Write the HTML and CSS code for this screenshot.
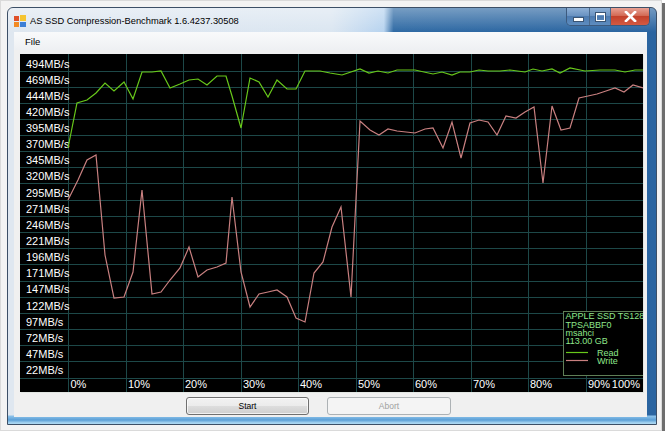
FILE: index.html
```html
<!DOCTYPE html>
<html>
<head>
<meta charset="utf-8">
<link rel="stylesheet" href="styles.css">
</head>
<body>
<div class="shot">
  <div class="window">
    <div class="titlebar">
      <svg class="appicon" width="12" height="12" viewBox="0 0 12 12">
        <rect x="0" y="1" width="5" height="5" fill="#e0502a"/>
        <rect x="6" y="0" width="6" height="6" fill="#f5c431"/>
        <rect x="0" y="7" width="5" height="5" fill="#f28a24"/>
        <rect x="6" y="7" width="6" height="5" fill="#3d7fd6"/>
      </svg>
      <span class="title">AS SSD Compression-Benchmark 1.6.4237.30508</span>
      <div class="caption">
        <div class="cbtn min"><span class="glyph-min"></span></div>
        <div class="cbtn max"><span class="glyph-max"></span></div>
        <div class="cbtn close">
          <svg width="13" height="11" viewBox="0 0 13 11"><path d="M2 1 L11 10 M11 1 L2 10" stroke="#fff" stroke-width="2.6" stroke-linecap="square"/></svg>
        </div>
      </div>
    </div>
    <div class="frame-row">
      <div class="client">
        <div class="menubar"><span class="menuitem">File</span></div>
        <div class="chart">
          <svg class="plot" width="623" height="338" viewBox="0 0 623 338">
            <g class="grid">
              <path d="M0 17.5H623M0 33.5H623M0 49.5H623M0 65.5H623M0 81.5H623M0 97.5H623M0 113.5H623M0 129.5H623M0 146.5H623M0 162.5H623M0 178.5H623M0 194.5H623M0 210.5H623M0 227.5H623M0 243.5H623M0 259.5H623M0 275.5H623M0 291.5H623M0 307.5H623M0 324.5H623"/>
              <path d="M48.5 0V338M106.5 0V338M163.5 0V338M221.5 0V338M278.5 0V338M336.5 0V338M393.5 0V338M451.5 0V338M508.5 0V338M566.5 0V338"/>
            </g>
            <g class="ylab">
              <text x="6" y="13.5">494MB/s</text>
              <text x="6" y="29.5">469MB/s</text>
              <text x="6" y="45.5">444MB/s</text>
              <text x="6" y="62">420MB/s</text>
              <text x="6" y="78">395MB/s</text>
              <text x="6" y="94">370MB/s</text>
              <text x="6" y="110">345MB/s</text>
              <text x="6" y="126">320MB/s</text>
              <text x="6" y="142.5">295MB/s</text>
              <text x="6" y="158.5">271MB/s</text>
              <text x="6" y="174.5">246MB/s</text>
              <text x="6" y="191">221MB/s</text>
              <text x="6" y="207">196MB/s</text>
              <text x="6" y="223">171MB/s</text>
              <text x="6" y="239">147MB/s</text>
              <text x="6" y="255.5">122MB/s</text>
              <text x="6" y="271.5">97MB/s</text>
              <text x="6" y="287.5">72MB/s</text>
              <text x="6" y="304">47MB/s</text>
              <text x="6" y="320">22MB/s</text>
            </g>
            <g class="xlab">
              <text x="50.5" y="334">0%</text>
              <text x="108" y="334">10%</text>
              <text x="165" y="334">20%</text>
              <text x="223" y="334">30%</text>
              <text x="280" y="334">40%</text>
              <text x="338" y="334">50%</text>
              <text x="395" y="334">60%</text>
              <text x="453" y="334">70%</text>
              <text x="510" y="334">80%</text>
              <text x="568" y="334">90%</text>
              <text x="620" y="334" text-anchor="end">100%</text>
            </g>
            <polyline class="read" transform="translate(-20 -54)" points="68,148 77,103 87,100 96,93 105,83 114,91 124,82 133,99 142,72 152,72 161,71 170,88 180,84 189,80 198,79 207,85 217,76 226,76 232,96 241,128 250,78 259,82 268,97 277,80 287,89 296,89 305,71 320,71 330,73 342,75 360,69 369,73 378,71 388,73 397,70 415,70 433,74 442,72 452,75 460,72 470,72 479,70 488,71 500,71 510,70 525,72 533,69 542,71 552,69 560,73 570,68 585,71 600,70 615,70 625,72 635,70 643,70"/>
            <polyline class="write" transform="translate(-20 -54)" points="68,200 78,180 87,160 96,155 105,255 114,298 124,297 133,272 142,190 152,294 161,292 170,280 180,268 189,247 198,277 207,270 217,267 226,263 232,197 241,272 250,307 259,294 268,292 277,290 287,297 296,318 305,322 314,273 323,262 332,227 341,207 351,297 360,121 370,130 379,135 388,129 397,131 415,133 425,129 433,128 443,148 452,122 461,158 470,123 479,120 488,122 497,135 506,116 516,118 525,112 534,107 543,183 552,106 561,130 570,128 579,98 588,96 597,94 606,91 615,88 624,92 633,85 643,88"/>
            <g class="legend">
              <rect class="lbox" x="543.5" y="257.5" width="90" height="64"/>
              <text x="545.5" y="265">APPLE SSD TS128B</text>
              <text x="545.5" y="273.5">TPSABBF0</text>
              <text x="545.5" y="281.5">msahci</text>
              <text x="545.5" y="290">113.00 GB</text>
              <line x1="546" y1="298.5" x2="568" y2="298.5" class="lread"/>
              <line x1="546" y1="306.5" x2="568" y2="306.5" class="lwrite"/>
              <text x="577" y="301.5">Read</text>
              <text x="577" y="309.5">Write</text>
            </g>
          </svg>
        </div>
        <div class="buttons">
          <button class="btn">Start</button>
          <button class="btn" disabled>Abort</button>
        </div>
      </div>
    </div>
  </div>
</div>
</body>
</html>
```

FILE: styles.css
```css
html, body {
  margin: 0;
  padding: 0;
  background: #ffffff;
}
.shot {
  width: 662px;
  height: 431px;
  padding: 6px 0 0 6px;
  box-sizing: border-box;
  background: #f3f3f3;
  border: 1px solid #dadada;
  box-shadow: 3px 3px 0 #6e6e6e;
}
.window {
  width: 650px;
  height: 418px;
  box-sizing: border-box;
  display: flex;
  flex-direction: column;
  border: 1px solid #3c4f66;
  border-radius: 6px 6px 0 0;
  background: linear-gradient(to right, #dfe7f0 0, #dbe6f1 50%, #b7d3ef 58%, #2f6aa4 59.5%, #2a64a0 100%);
  overflow: hidden;
}
.titlebar {
  height: 24px;
  flex: none;
  display: flex;
  align-items: center;
  padding-left: 6px;
  background: linear-gradient(to bottom, rgba(255,255,255,0.35), rgba(255,255,255,0));
}
.appicon {
  flex: none;
  margin-top: 2px;
}
.title {
  margin-left: 4px;
  margin-top: 1px;
  font-family: "Liberation Sans", Arial, sans-serif;
  font-size: 9.3px;
  color: #000;
  white-space: nowrap;
}
.caption {
  margin-left: auto;
  margin-right: 6px;
  align-self: flex-start;
  display: flex;
  height: 17px;
  border: 1px solid #3c5a7e;
  border-top: none;
  border-radius: 0 0 5px 5px;
  overflow: hidden;
}
.cbtn {
  display: flex;
  align-items: center;
  justify-content: center;
  border-right: 1px solid #4a6a8e;
  background: linear-gradient(to bottom, #8eb0d6 0, #6a93c2 45%, #4d7bb0 50%, #5e8dc0 100%);
}
.cbtn.min { width: 22px; }
.cbtn.max { width: 20px; }
.cbtn.close {
  width: 38px;
  border-right: none;
  background: linear-gradient(to bottom, #e8a194 0, #d36a55 45%, #c3412b 50%, #d45a42 100%);
}
.glyph-min {
  width: 9px;
  height: 3px;
  margin-top: 5px;
  background: #fff;
  border: 1px solid #3b5574;
}
.glyph-max {
  width: 7px;
  height: 5px;
  border: 1px solid #fff;
  border-top-width: 2px;
  box-shadow: 0 0 0 1px #3b5574;
}
.frame-row {
  flex: 1;
  display: flex;
  padding: 0 9px 7px 6px;
  background: linear-gradient(to bottom, transparent 0, transparent 383px, #8cc2ea 384px, #5b9fd6 388px, #a9d6f1 391px);
}
.client {
  width: 633px;
  height: 385px;
  background: #f0f0f0;
  display: flex;
  flex-direction: column;
  border: 0;
}
.menubar {
  height: 18px;
  flex: none;
  display: flex;
  align-items: center;
  background: linear-gradient(to bottom, #f9fafb, #eef0f3);
}
.menuitem {
  font-family: "Liberation Sans", Arial, sans-serif;
  font-size: 9.5px;
  color: #000;
  padding-left: 11px;
}
.chart {
  margin: 4px 0 0 6px;
  width: 623px;
  height: 338px;
  background: #000;
  flex: none;
  box-shadow: 1px 1px 0 #e2e6e2;
}
.plot {
  display: block;
}
.grid path {
  stroke: #1d4848;
  stroke-width: 1;
  fill: none;
}
.ylab text, .xlab text {
  fill: #ffffff;
  font-family: "Liberation Sans", Arial, sans-serif;
  font-size: 11px;
}
.read {
  fill: none;
  stroke: #68c81a;
  stroke-width: 1.2;
}
.write {
  fill: none;
  stroke: #c98080;
  stroke-width: 1.2;
}
.lbox {
  fill: #000;
  stroke: #5f7f57;
  stroke-width: 1;
}
.legend text {
  fill: #8ee68a;
  font-family: "Liberation Sans", Arial, sans-serif;
  font-size: 9px;
}
.lread { stroke: #68c81a; stroke-width: 1.2; }
.lwrite { stroke: #c98080; stroke-width: 1.2; }
.buttons {
  display: flex;
  gap: 18px;
  margin: 5px 0 0 172px;
}
.btn {
  width: 123px;
  height: 18px;
  padding: 0;
  border: 1px solid #707070;
  border-radius: 3px;
  background: linear-gradient(to bottom, #f2f2f2 0, #ebebeb 50%, #dddddd 51%, #cfcfcf 100%);
  font-family: "Liberation Sans", Arial, sans-serif;
  font-size: 8.5px;
  color: #000;
  box-shadow: inset 0 0 0 1px rgba(255,255,255,0.7);
}
.btn:disabled {
  width: 124px;
  border-color: #adb2b5;
  background: #f4f4f4;
  color: #a0a0a0;
  box-shadow: none;
}
```
